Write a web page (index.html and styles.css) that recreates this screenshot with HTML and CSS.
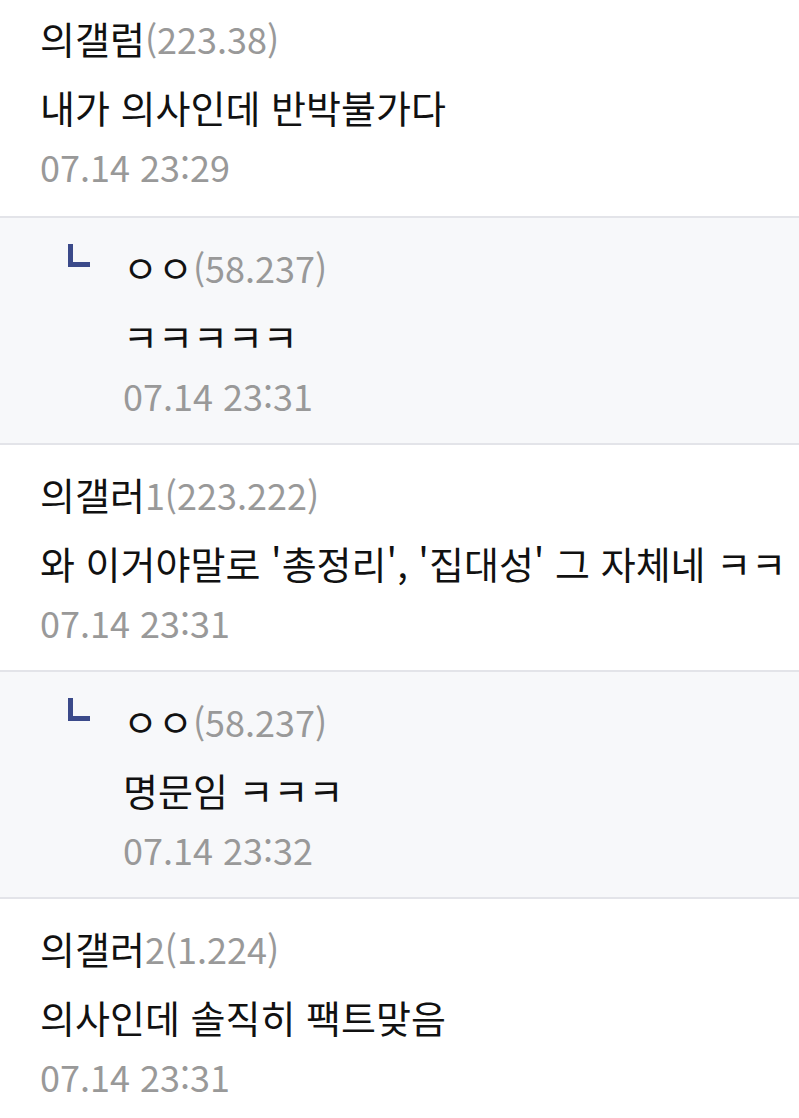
FILE: index.html
```html
<!DOCTYPE html>
<html lang="ko">
<head>
    <meta charset="UTF-8" />
    <title>댓글</title>
    <link rel="stylesheet" href="styles.css">
</head>
<body>

    <ul class="comments">
        <li class="comment first">
            <div class="writer">의갤럼<span class="ip">(223.38)</span></div>
            <p class="text">내가 의사인데 반박불가다</p>
            <div class="date">07.14 23:29</div>
        </li>
        <li class="comment reply">
            <span class="reply-mark"></span>
            <div class="body">
                <div class="writer">ㅇㅇ<span class="ip">(58.237)</span></div>
                <p class="text">ㅋㅋㅋㅋㅋ</p>
                <div class="date">07.14 23:31</div>
            </div>
        </li>
        <li class="comment">
            <div class="writer">의갤러<span class="ip">1(223.222)</span></div>
            <p class="text">와 이거야말로 '총정리', '집대성' 그 자체네 ㅋㅋ</p>
            <div class="date">07.14 23:31</div>
        </li>
        <li class="comment reply">
            <span class="reply-mark"></span>
            <div class="body">
                <div class="writer">ㅇㅇ<span class="ip">(58.237)</span></div>
                <p class="text">명문임 ㅋㅋㅋ</p>
                <div class="date">07.14 23:32</div>
            </div>
        </li>
        <li class="comment">
            <div class="writer">의갤러<span class="ip">2(1.224)</span></div>
            <p class="text">의사인데 솔직히 팩트맞음</p>
            <div class="date">07.14 23:31</div>
        </li>
    </ul>

</body>
</html>
```

FILE: styles.css
```css
body {
    margin: 0;
    background: #fff;
    font-family: 'Noto Sans CJK KR', 'Noto Sans', sans-serif;
    color: #111;
    overflow: hidden;
}
.comments {
    list-style: none;
    margin: 0;
    padding: 0;
}
.comment {
    display: flex;
    padding: 23px 0 22px 40px;
    border-bottom: 2px solid #e3e4e9;
    white-space: nowrap;
    overflow: hidden;
}
.comment.first {
    padding-top: 12px;
    padding-bottom: 24px;
}
.comment:not(.reply) {
    flex-direction: column;
}
.reply {
    background-color: #f7f8fa;
    padding-left: 68px;
}
.reply-mark {
    width: 17px;
    height: 18px;
    margin-top: 3px;
    margin-right: 33px;
    border-left: 5px solid #3b4a8a;
    border-bottom: 5px solid #3b4a8a;
    flex-shrink: 0;
}
.writer {
    font-size: 38px;
    line-height: 52px;
}
.ip {
    font-size: 36px;
    color: #999;
}
.text {
    margin: 17px 0 0;
    font-size: 38px;
    line-height: 52px;
}
.date {
    margin-top: 7px;
    font-size: 36px;
    line-height: 52px;
    color: #999;
}
```
